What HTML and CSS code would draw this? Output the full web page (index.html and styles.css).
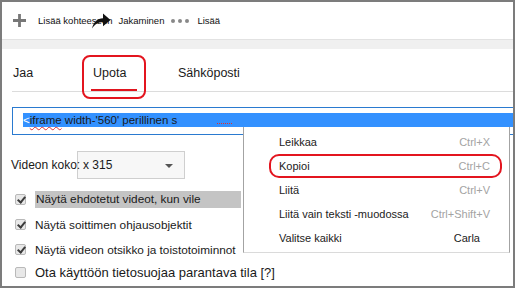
FILE: index.html
```html
<!DOCTYPE html>
<html lang="fi">
<head>
  <meta charset="UTF-8" />
  <title>Upota</title>
  <link rel="stylesheet" href="styles.css">
</head>
<body>
  <div class="frame">
    <div class="toolbar">
      <svg class="plus" width="13" height="13" viewBox="0 0 13 13"><path d="M6.5 0v13M0 6.5h13" stroke="#777" stroke-width="2.8"/></svg>
      <span class="tool-label">Lisää kohteeseen</span>
      <svg class="share" width="20" height="17" viewBox="0 0 20 17"><path d="M1 16.5C2.5 10 6.5 6.5 12 6.3V1.5L19.5 8L12 14.2V10.3C7.5 10.2 4 12 1 16.5Z" fill="#111"/></svg>
      <span class="tool-label">Jakaminen</span>
      <span class="dots"><i></i><i></i><i></i></span>
      <span class="tool-label">Lisää</span>
    </div>
    <div class="band"></div>

    <div class="tabs">
      <div class="tab">Jaa</div>
      <div class="tab active">Upota</div>
      <div class="tab">Sähköposti</div>
    </div>

    <div class="embed">
      <div class="selection"><span class="lt">&lt;</span><span class="typo">iframe</span> width-'560' perillinen s<span class="squiggle"></span></div>
    </div>

    <div class="size-row">
      <span class="size-label">Videon koko:</span>
      <div class="dropdown">x 315<span class="caret"></span></div>
    </div>

    <div class="options">
      <div class="option"><span class="box checked"></span><span class="text hl">Näytä ehdotetut videot, kun vile</span></div>
      <div class="option"><span class="box checked"></span><span class="text">Näytä soittimen ohjausobjektit</span></div>
      <div class="option"><span class="box checked"></span><span class="text">Näytä videon otsikko ja toistotoiminnot</span></div>
      <div class="option last"><span class="box"></span><span class="text">Ota käyttöön tietosuojaa parantava tila [?]</span></div>
    </div>

    <div class="menu">
      <div class="item"><span>Leikkaa</span><span class="key">Ctrl+X</span></div>
      <div class="item"><span>Kopioi</span><span class="key">Ctrl+C</span></div>
      <div class="item"><span>Liitä</span><span class="key">Ctrl+V</span></div>
      <div class="item"><span>Liitä vain teksti -muodossa</span><span class="key">Ctrl+Shift+V</span></div>
      <div class="item"><span>Valitse kaikki</span><span class="key plain">Carla</span></div>
    </div>

    <div class="mark mark-tab"></div>
    <div class="mark mark-copy"></div>
  </div>
</body>
</html>
```

FILE: styles.css
```css
body {
  margin: 0;
  font-family: "Liberation Sans", Arial, sans-serif;
  color: #1a1a1a;
}
.frame {
  position: relative;
  width: 515px;
  height: 288px;
  box-sizing: border-box;
  border: 2px solid #7c7c7c;
  overflow: hidden;
  display: flex;
  flex-direction: column;
}
.toolbar {
  height: 37px;
  display: flex;
  align-items: center;
  padding-left: 11px;
  font-size: 9.5px;
}
.plus {
  margin-right: 12px;
}
.tool-label {
  color: #111;
}
.share {
  margin-left: -21px;
  margin-right: 7px;
  margin-top: -1px;
}
.dots {
  display: flex;
  gap: 3px;
  margin: 0 8px 0 7px;
}
.dots i {
  width: 4px;
  height: 4px;
  border-radius: 50%;
  background: #888;
}
.band {
  height: 9px;
  background: #f0f0f0;
  border-top: 1px solid #e2e2e2;
}
.tabs {
  height: 43px;
  box-sizing: border-box;
  margin-left: 10px;
  padding-top: 17px;
  border-bottom: 1px solid #dcdcdc;
  display: grid;
  grid-template-columns: 80px 85px auto;
  font-size: 12.5px;
}
.tab {
  padding-left: 1px;
  position: relative;
}
.tab.active::after {
  content: "";
  position: absolute;
  left: -1px;
  bottom: 0;
  width: 46px;
  height: 2px;
  background: #e0141e;
}
.embed {
  margin: 15px 0 0 10px;
  height: 28px;
  box-sizing: border-box;
  border: 1px solid #2a7ad0;
  border-right: none;
  padding: 5px 0 0 10px;
}
.selection {
  height: 14px;
  background: #3391ff;
  font-size: 11.5px;
  line-height: 14px;
  white-space: nowrap;
}
.lt {
  color: #fff;
}
.typo {
  text-decoration: underline wavy #e03030;
  text-decoration-thickness: 1px;
  text-underline-offset: 2px;
}
.squiggle {
  display: inline-block;
  width: 15px;
  margin-left: 40px;
  border-bottom: 1px dotted #e03030;
}
.size-row {
  margin: 16px 0 0 9px;
  display: flex;
  align-items: center;
  font-size: 12px;
}
.size-label {
  width: 66px;
  flex-shrink: 0;
  white-space: nowrap;
  position: relative;
  z-index: 1;
}
.dropdown {
  position: relative;
  width: 108px;
  height: 28px;
  box-sizing: border-box;
  border: 1px solid #cfcfcf;
  background: #f7f7f7;
  padding-left: 5px;
  display: flex;
  align-items: center;
}
.caret {
  position: absolute;
  right: 11px;
  top: 12px;
  border-left: 4px solid transparent;
  border-right: 4px solid transparent;
  border-top: 4px solid #555;
}
.options {
  margin: 8px 0 0 13px;
  font-size: 11.8px;
}
.option {
  height: 25px;
  display: flex;
  align-items: center;
}
.option.last {
  margin-top: -2px;
  font-size: 13px;
}
.box {
  width: 11px;
  height: 11px;
  box-sizing: border-box;
  border: 1px solid #b9b9b9;
  border-radius: 2px;
  background: #e8e8e8;
  margin-right: 9px;
  position: relative;
}
.box.checked::after {
  content: "";
  position: absolute;
  left: 3px;
  top: 0px;
  width: 3px;
  height: 6px;
  border: solid #3c3c3c;
  border-width: 0 2px 2px 0;
  transform: rotate(40deg);
}
.text.hl {
  background: #c4c4c4;
  width: 205px;
  line-height: 17px;
  padding-left: 1px;
}
.menu {
  position: absolute;
  left: 241px;
  top: 125px;
  width: 267px;
  box-sizing: border-box;
  background: #fff;
  border-left: 1px solid #a3a3a3;
  border-right: 1px solid #a3a3a3;
  border-bottom: 1px solid #dadada;
  padding: 3px 0 2px;
  font-size: 11px;
}
.item {
  height: 24px;
  display: flex;
  align-items: center;
  justify-content: space-between;
  padding: 0 19px 0 35px;
  color: #222;
}
.key {
  color: #a3a3a3;
}
.key.plain {
  color: #222;
  margin-right: 10px;
}
.mark {
  position: absolute;
  border: 2px solid #e3151f;
  box-sizing: border-box;
}
.mark-tab {
  left: 80px;
  top: 53px;
  width: 64px;
  height: 44px;
  border-radius: 8px;
}
.mark-copy {
  left: 267px;
  top: 152px;
  width: 233px;
  height: 24px;
  border-radius: 10px;
}
```
